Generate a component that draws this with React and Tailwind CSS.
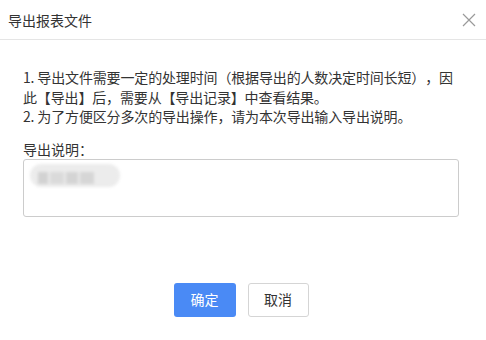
import React from "react";

const font = { fontFamily: '"Microsoft YaHei", "Noto Sans CJK SC", "Noto Sans", sans-serif' };

function CloseIcon() {
  return (
    <svg width="14" height="14" viewBox="0 0 14 14" className="text-[#9a9a9a]">
      <path d="M1 1 L13 13 M13 1 L1 13" stroke="currentColor" strokeWidth="1.2" fill="none" />
    </svg>
  );
}

export default function App() {
  return (
    <div className="w-[486px] h-[340px] bg-white text-[#333] text-[14px] flex flex-col [text-spacing-trim:space-all]" style={font}>
      <div className="h-[40px] border-b border-[#e5e5e5] flex items-center justify-between pl-[8px] pr-[10px]">
        <span className="leading-[20px]">导出报表文件</span>
        <CloseIcon />
      </div>
      <div className="px-[23px] pt-[28px] w-[486px]">
        <p className="leading-[19.5px] tracking-[-0.15px]">
          1. 导出文件需要一定的处理时间（根据导出的人数决定时间长短），因此【导出】后，需要从【导出记录】中查看结果。
          <br />
          2. 为了方便区分多次的导出操作，请为本次导出输入导出说明。
        </p>
        <div className="mt-[12px] leading-[20px]">导出说明：</div>
        <div className="h-[58px] w-[436px] border border-[#cccccc] rounded-[3px] px-[6px] pt-[4px]">
          <div className="w-[90px] h-[23px] rounded-full bg-[#ececec] flex items-end gap-[2px] px-[8px] pb-[3px] blur-[1.5px]">
            <div className="w-[10px] h-[12px] bg-[#d2d2d2]" />
            <div className="w-[14px] h-[12px] bg-[#dadada]" />
            <div className="w-[12px] h-[12px] bg-[#d4d4d4]" />
            <div className="w-[14px] h-[12px] bg-[#d6d6d6]" />
          </div>
        </div>
      </div>
      <div className="flex justify-center gap-[12px] mt-[66px] pr-[4px]">
        <button className="w-[62px] h-[34px] rounded-[3px] bg-[#4a8af5] text-white text-[14px]">确定</button>
        <button className="w-[61px] h-[34px] rounded-[3px] border border-[#d5d5d5] bg-white text-[#333] text-[14px]">取消</button>
      </div>
    </div>
  );
}
